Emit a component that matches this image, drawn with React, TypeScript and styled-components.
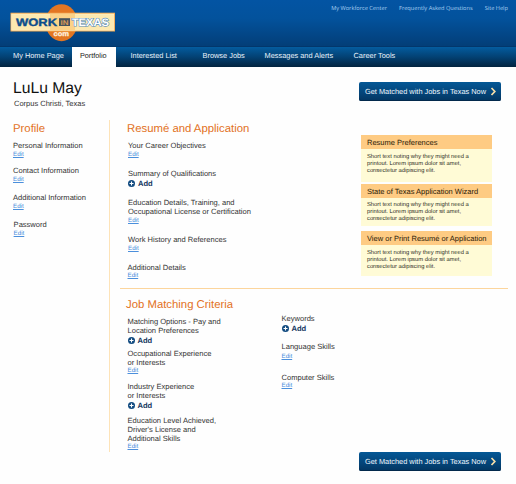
import React from "react";
import styled, { createGlobalStyle } from "styled-components";

const GlobalStyle = createGlobalStyle`
  * { box-sizing: border-box; }
  body {
    margin: 0;
    background: #fefefe;
    color: #333;
    font-family: "Liberation Sans", Arial, sans-serif;
    font-size: 7.55px;
    text-rendering: geometricPrecision;
    overflow: hidden;
  }
`;

const Page = styled.div`
  width: 516px;
  height: 484px;
  display: flex;
  flex-direction: column;
`;

const Header = styled.header`
  height: 46px;
  flex: none;
  display: flex;
  justify-content: space-between;
  padding: 4px 8px 0 9px;
  background: linear-gradient(#0354a3, #03529c 40%, #033e78);
`;

const UtilityLinks = styled.nav`
  display: flex;
  gap: 12px;
  font-family: "Open Sans", sans-serif;
  font-size: 5.65px;
  line-height: 8px;
  color: #a9d0f2;
`;

const NavBar = styled.nav`
  height: 21px;
  flex: none;
  display: flex;
  border-top: 1px solid #02376c;
  background: linear-gradient(#045c9f, #034173 50%, #02233f);
`;

const NavItem = styled.a<{ $width: number; $active?: boolean }>`
  width: ${(p) => p.$width}px;
  flex: none;
  padding-left: ${(p) => (p.$active ? 8 : 0)}px;
  font-size: ${(p) => (p.$active ? 7.25 : 7.4)}px;
  line-height: 17px;
  white-space: nowrap;
  color: ${(p) => (p.$active ? "#222" : "#e8f2fb")};
  background: ${(p) => (p.$active ? "#fff" : "transparent")};
`;

const NavSpacer = styled.span<{ $width: number }>`
  width: ${(p) => p.$width}px;
  flex: none;
`;

const TitleRow = styled.div`
  height: 53px;
  flex: none;
  display: flex;
  justify-content: space-between;
  padding: 12px 15px 0 13px;
`;

const Name = styled.h1`
  margin: 0;
  padding-top: 1px;
  font-size: 15.7px;
  font-weight: 400;
  line-height: 18px;
  color: #111;
`;

const Place = styled.div`
  margin-top: 1px;
  padding-left: 1px;
  font-size: 7.5px;
  line-height: 9px;
`;

const MatchButton = styled.button`
  width: 142px;
  height: 19px;
  margin-top: 3px;
  padding: 0 4px 0 6px;
  display: flex;
  align-items: center;
  justify-content: space-between;
  border: 0;
  border-radius: 2px;
  background: linear-gradient(#045896, #044478 60%, #033560);
  box-shadow: inset 0 -1px 0 #02294c;
  color: #f2f7fc;
  font: 7.4px "Liberation Sans", Arial, sans-serif;
  white-space: nowrap;
  text-rendering: geometricPrecision;
`;

const Columns = styled.main`
  flex: none;
  height: 332px;
  display: flex;
`;

const ProfileColumn = styled.section`
  width: 110px;
  padding: 3px 0 0 13px;
  border-right: 1px solid #fde3b8;
`;

const Content = styled.div`
  flex: 1;
  padding-left: 10px;
`;

const ResumeSection = styled.section`
  height: 169px;
  width: 388px;
  display: flex;
  justify-content: space-between;
  padding: 3px 16px 0 7px;
  border-bottom: 1px solid #fcd59c;
`;

const CriteriaSection = styled.section`
  display: flex;
  padding: 10px 0 0 6px;
`;

const CriteriaColumn = styled.div<{ $width: number; $top?: number }>`
  width: ${(p) => p.$width}px;
  padding-top: ${(p) => p.$top ?? 0}px;
`;

const Heading = styled.h2`
  margin: 0;
  font-size: 11.35px;
  font-weight: 400;
  line-height: 13px;
  white-space: nowrap;
  color: #e2711d;
`;

const EntryBox = styled.div<{ $before: number; $indent: number }>`
  margin-top: ${(p) => p.$before}px;
  padding-left: ${(p) => p.$indent}px;
`;

const Label = styled.div`
  line-height: 9px;
  white-space: nowrap;
`;

const EditLink = styled.a<{ $gap: number }>`
  display: block;
  width: fit-content;
  margin-top: ${(p) => p.$gap}px;
  font-size: 6.2px;
  line-height: 8px;
  color: #4b8fdc;
  text-decoration: underline;
`;

const AddLink = styled.a`
  display: flex;
  align-items: center;
  gap: 3px;
  height: 9px;
  margin-top: 1px;
  font-size: 7.6px;
  font-weight: 700;
  color: #14375f;
`;

const Panels = styled.aside`
  width: 131px;
  padding-top: 12px;
`;

const Panel = styled.div<{ $height: number }>`
  height: ${(p) => p.$height}px;
`;

const PanelTitle = styled.h3`
  margin: 0;
  height: 14px;
  padding-left: 6px;
  font-size: 7.5px;
  font-weight: 400;
  line-height: 15px;
  white-space: nowrap;
  color: #2b1a08;
  background: #fecb83;
`;

const PanelText = styled.p<{ $height: number }>`
  margin: 0;
  height: ${(p) => p.$height}px;
  padding: 4.5px 0 0 6px;
  font-size: 5.8px;
  line-height: 7px;
  white-space: nowrap;
  color: #2c2c1c;
  background: #fffbd6;
`;

const Footer = styled.footer`
  display: flex;
  justify-content: flex-end;
  padding-right: 15px;
  margin-top: -3px;
`;

function Logo() {
  return (
    <svg width="108" height="40" viewBox="9 4 108 40">
      <ellipse cx="61.5" cy="22.7" rx="16" ry="18.5" fill="#e37622" />
      <rect x="10.5" y="12.7" width="104.5" height="18.8" fill="#f4a94f" />
      <rect x="11.7" y="14" width="102.1" height="16.2" fill="#fde9b0" stroke="#fff3cf" strokeWidth=".6" />
      <rect x="50" y="14" width="25" height="16.2" fill="#fbd287" />
      <g fontFamily="Liberation Sans, Arial, sans-serif" fontWeight="700">
        <text x="16" y="25.5" fontSize="10.8" fill="#0c4d8c" stroke="#0c4d8c" strokeWidth=".4" textLength="41" lengthAdjust="spacingAndGlyphs">WORK</text>
        <rect x="59" y="18.2" width="11" height="7.8" fill="#44535c" />
        <text x="60.5" y="24.7" fontSize="6.8" fill="#d99a55" textLength="8" lengthAdjust="spacingAndGlyphs">IN</text>
        <text x="71.7" y="25.5" fontSize="10.8" fill="#fff" stroke="#5a8fbe" strokeWidth="1.2" paintOrder="stroke" textLength="37.3" lengthAdjust="spacingAndGlyphs">TEXAS</text>
        <text x="53.5" y="36.2" fontSize="7" fill="#fff0dc" stroke="#fff0dc" strokeWidth=".3" textLength="15.5" lengthAdjust="spacingAndGlyphs">com</text>
      </g>
    </svg>
  );
}

function GetMatched() {
  return (
    <MatchButton>
      Get Matched with Jobs in Texas Now
      <svg width="7" height="9" viewBox="0 0 7 9">
        <path d="M1.5 1 L4.8 4.5 L1.5 8" fill="none" stroke="#fbe0a8" strokeWidth="1.7" />
      </svg>
    </MatchButton>
  );
}

function PlusIcon() {
  return (
    <svg width="7" height="7" viewBox="0 0 7 7">
      <circle cx="3.5" cy="3.5" r="3.5" fill="#124b80" />
      <path d="M3.5 1.5V5.5M1.5 3.5H5.5" stroke="#fff" strokeWidth="1.1" />
    </svg>
  );
}

type EntryProps = { lines: string[]; before: number; add?: boolean; indent?: number; editGap?: number };

function Entry({ lines, before, add, indent = 0, editGap = 0 }: EntryProps) {
  return (
    <EntryBox $before={before} $indent={indent}>
      {lines.map((line) => (
        <Label key={line}>{line}</Label>
      ))}
      {add ? (
        <AddLink>
          <PlusIcon />
          Add
        </AddLink>
      ) : (
        <EditLink $gap={editGap}>Edit</EditLink>
      )}
    </EntryBox>
  );
}

const panels = [
  { title: "Resume Preferences", height: 48.5, body: 33 },
  { title: "State of Texas Application Wizard", height: 47.5, body: 28 },
  { title: "View or Print Resumé or Application", height: 46, body: 31 },
];

export default function App() {
  return (
    <>
      <GlobalStyle />
      <Page>
        <Header>
          <Logo />
          <UtilityLinks>
            <span>My Workforce Center</span>
            <span>Frequently Asked Questions</span>
            <span>Site Help</span>
          </UtilityLinks>
        </Header>
        <NavBar>
          <NavSpacer $width={13} />
          <NavItem $width={59}>My Home Page</NavItem>
          <NavItem $width={44} $active>Portfolio</NavItem>
          <NavSpacer $width={14.5} />
          <NavItem $width={72}>Interested List</NavItem>
          <NavItem $width={62}>Browse Jobs</NavItem>
          <NavItem $width={89}>Messages and Alerts</NavItem>
          <NavItem $width={60}>Career Tools</NavItem>
        </NavBar>
        <TitleRow>
          <div>
            <Name>LuLu May</Name>
            <Place>Corpus Christi, Texas</Place>
          </div>
          <GetMatched />
        </TitleRow>
        <Columns>
          <ProfileColumn>
            <Heading>Profile</Heading>
            <Entry before={5} editGap={0.5} lines={["Personal Information"]} />
            <Entry before={7.5} editGap={1} lines={["Contact Information"]} />
            <Entry before={9} editGap={0.5} lines={["Additional Information"]} />
            <Entry before={9} editGap={1} indent={0.6} lines={["Password"]} />
          </ProfileColumn>
          <Content>
            <ResumeSection>
              <div>
                <Heading>Resumé and Application</Heading>
                <Entry before={5} editGap={1} indent={1} lines={["Your Career Objectives"]} />
                <Entry before={10} indent={1} add lines={["Summary of Qualifications"]} />
                <Entry before={10} indent={1} editGap={1} lines={["Education Details, Training, and", "Occupational License or Certification"]} />
                <Entry before={10} indent={1} editGap={1} lines={["Work History and References"]} />
                <Entry before={10} indent={0.5} lines={["Additional Details"]} />
              </div>
              <Panels>
                {panels.map((panel) => (
                  <Panel key={panel.title} $height={panel.height}>
                    <PanelTitle>{panel.title}</PanelTitle>
                    <PanelText $height={panel.body}>
                      Short text noting why they might need a
                      <br />
                      printout. Lorem ipsum dolor sit amet,
                      <br />
                      consectetur adipiscing elit.
                    </PanelText>
                  </Panel>
                ))}
              </Panels>
            </ResumeSection>
            <CriteriaSection>
              <CriteriaColumn $width={155}>
                <Heading>Job Matching Criteria</Heading>
                <Entry before={4.5} indent={1.5} add lines={["Matching Options - Pay and", "Location Preferences"]} />
                <Entry before={4.5} indent={1.5} lines={["Occupational Experience", "or Interests"]} />
                <Entry before={7} indent={1.5} add lines={["Industry Experience", "or Interests"]} />
                <Entry before={6} indent={1.5} lines={["Education Level Achieved,", "Driver's License and", "Additional Skills"]} />
              </CriteriaColumn>
              <CriteriaColumn $width={120} $top={14.5}>
                <Entry before={0} indent={0.5} add lines={["Keywords"]} />
                <Entry before={9.5} indent={0.5} editGap={1.5} lines={["Language Skills"]} />
                <Entry before={12} indent={0.5} lines={["Computer Skills"]} />
              </CriteriaColumn>
            </CriteriaSection>
          </Content>
        </Columns>
        <Footer>
          <GetMatched />
        </Footer>
      </Page>
    </>
  );
}
